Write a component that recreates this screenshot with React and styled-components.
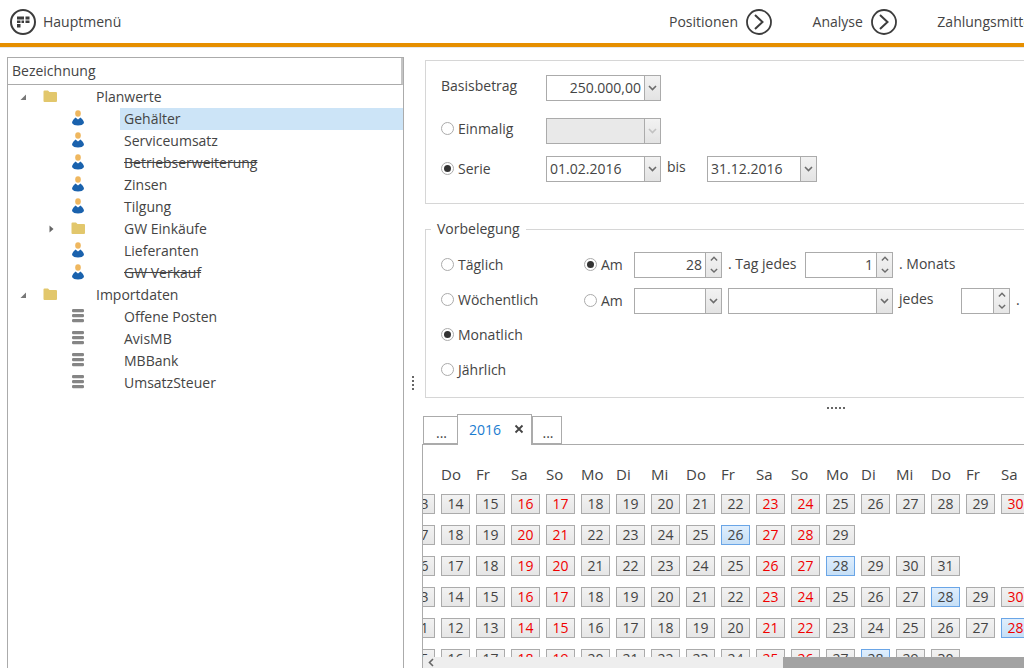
import React from "react";
import styled, { createGlobalStyle } from "styled-components";

const Global = createGlobalStyle`
  html, body { margin: 0; padding: 0; background: #fff; }
  body { font-family: "Open Sans", "Noto Sans", sans-serif; font-size: 14px; color: #444; overflow: hidden; }
`;

const Shell = styled.div`
  width: 1024px; height: 668px; overflow: hidden; display: flex; flex-direction: column;
`;
const TopBar = styled.header`
  height: 43px; flex: none; display: flex; align-items: center; padding-left: 10px;
  border-bottom: 4px solid #e68f00; box-shadow: 0 1px 0 #e8e8e8; white-space: nowrap;
`;
const HomeLink = styled.div`
  width: 659px; flex: none; display: flex; align-items: center; gap: 7px;
`;
const NavItem = styled.div`
  flex: none; display: flex; align-items: center; gap: 8px; margin-right: 40.5px;
`;
const Main = styled.div`
  flex: 1; min-height: 0; display: flex; padding-top: 10px;
`;
const TreePanel = styled.section`
  width: 397px; flex: none; margin-left: 7px; box-sizing: border-box;
  border: 1px solid #ababab; border-bottom: 0; display: flex; flex-direction: column;
`;
const TreeHead = styled.div`
  height: 26px; line-height: 26px; padding-left: 4px; border-bottom: 1px solid #ababab;
  border-right: 2px solid #c4c4c4; flex: none;
`;
const Tree = styled.div`
  padding-top: 1px;
`;
const Row = styled.div`
  height: 22px; display: flex; align-items: center; padding-left: ${p => 8 + p.$depth * 28}px;
`;
const Expander = styled.span`
  width: 14px; flex: none; display: flex; justify-content: center;
`;
const IconSlot = styled.span`
  width: 28px; margin: -2px 28px 0 6px; flex: none; display: flex; justify-content: center;
`;
const Label = styled.span`
  flex: 1; height: 22px; line-height: 22px; padding-left: 4px;
  background: ${p => (p.$selected ? "#cce4f7" : "transparent")};
  text-decoration: ${p => (p.$struck ? "line-through" : "none")};
`;
const VSplit = styled.div`
  width: 18px; flex: none; display: flex; justify-content: center; padding-top: 319px; box-sizing: border-box;
`;
const VGrip = styled.div`
  width: 2px; height: 14px;
  background: repeating-linear-gradient(to bottom, #666 0 2px, transparent 2px 4px);
`;
const Right = styled.div`
  width: 660px; flex: none; display: flex; flex-direction: column; min-height: 0;
`;
const GroupBox = styled.div`
  margin: 3px 0 0 3px; height: 144px; box-sizing: border-box; border: 1px solid #d6d6d6; padding: 14px 15px 0;
  display: flex; flex-direction: column;
`;
const FormRow = styled.div`
  height: 26px; margin-top: ${p => p.$top || 0}px; display: flex; align-items: center;
`;
const FieldLabel = styled.span`
  width: 105px; flex: none; margin-top: -6px;
`;
const RadioLabel = styled.label`
  width: ${p => p.$width}px; flex: none; display: flex; align-items: center; gap: 4px;
  margin-top: ${p => p.$shift ?? 0}px;
`;
const RadioMark = styled.span`
  width: 13px; height: 13px; flex: none; box-sizing: border-box; border-radius: 50%; border: 1px solid #ababab;
  background: #fff; display: flex; align-items: center; justify-content: center;
  &::after { content: ""; width: 7px; height: 7px; border-radius: 50%; background: ${p => (p.$on ? "#333" : "transparent")}; }
`;
const Combo = styled.div`
  width: ${p => p.$width}px; height: 26px; flex: none; box-sizing: border-box; border: 1px solid #ababab; display: flex;
  background: ${p => (p.$disabled ? "#e9e9e9" : "#fff")};
`;
const ComboValue = styled.span`
  flex: 1; min-width: 0; line-height: 24px; padding: 0 3px; text-align: ${p => (p.$right ? "right" : "left")};
  box-sizing: border-box;
`;
const ComboButton = styled.span`
  width: 16px; flex: none; box-sizing: border-box; border-left: 1px solid #ababab; display: flex; align-items: center; justify-content: center;
  background: linear-gradient(#f2f2f2, #e3e3e3);
  color: ${p => (p.$disabled ? "#c2c2c2" : "#6c6c6c")};
`;
const Spin = styled.span`
  width: 16px; flex: none; box-sizing: border-box; border-left: 1px solid #ababab; display: flex; flex-direction: column; color: #6c6c6c;
  background: linear-gradient(#f4f4f4, #e6e6e6);
`;
const SpinPart = styled.span`
  flex: 1; display: flex; align-items: center; justify-content: center;
`;
const Inline = styled.span`
  flex: none; box-sizing: border-box; width: ${p => p.$width}px; padding-left: 6px;
  margin-top: ${p => p.$shift}px; white-space: nowrap;
`;
const Fieldset = styled.fieldset`
  margin: 15px 0 0 3px; padding: 8px 0 10px 15px; border: 1px solid #d6d6d6; min-width: 0;
`;
const Legend = styled.legend`
  padding: 0 6px; margin-left: -10px; line-height: 20px;
`;
const OptionRow = styled.div`
  height: 35px; display: flex; align-items: center;
`;
const OptionControls = styled.div`
  display: flex; align-items: center; margin-top: ${p => p.$shift}px;
`;
const HSplit = styled.div`
  height: 16px; flex: none; display: flex; padding: 9px 0 0 405px; box-sizing: border-box;
`;
const HGrip = styled.div`
  width: 18px; height: 2px;
  background: repeating-linear-gradient(to right, #666 0 2px, transparent 2px 4px);
`;
const Tabs = styled.div`
  display: flex; align-items: flex-end; height: 30px; flex: none; padding-left: 1px; position: relative; z-index: 1;
`;
const Tab = styled.div`
  box-sizing: border-box; width: ${p => p.$width}px; height: 28px; background: #fff;
  border: 1px solid #ababab; border-right-width: 0;
  display: flex; align-items: center; justify-content: center; padding: 5px 0 0 2px; font-size: 14px;
  &:last-child { border-right-width: 1px; }
`;
const ActiveTab = styled.div`
  box-sizing: border-box; width: ${p => p.$width}px; height: 31px; margin-bottom: -1px; background: #fff;
  border: 1px solid #ababab; border-bottom: 0;
  display: flex; align-items: center; padding: 0 0 2px 11px; gap: 13px;
`;
const TabTitle = styled.span`
  color: #1b7cd0;
`;
const CalendarView = styled.div`
  flex: 1; min-height: 0; position: relative; overflow: hidden; border: 1px solid #ababab; border-width: 1px 0 0 1px;
`;
const CalendarGrid = styled.div`
  display: grid; grid-template-columns: repeat(18, 29px); column-gap: 6px; row-gap: 11px; grid-auto-rows: 20px;
  margin-left: -17px; padding-top: 18px; width: 640px;
`;
const DayName = styled.span`
  line-height: 22px; font-size: 15px; white-space: nowrap;
`;
const Day = styled.div`
  box-sizing: border-box; height: 20px; line-height: 18px; text-align: center; font-size: 14px;
  border: 1px solid ${p => (p.$marked ? "#6aa5e6" : "#ababab")};
  background: ${p => (p.$marked ? "linear-gradient(#dfeefd, #c6dff6)" : "linear-gradient(#f2f2f2, #e6e6e6)")};
  color: ${p => (p.$weekend ? "#f00000" : "#444")};
`;
const Scrollbar = styled.div`
  position: absolute; left: 0; right: 0; bottom: 0; height: 11px; display: flex; background: #a3a3a3;
`;
const ScrollTrack = styled.div`
  width: 360px; flex: none; background: #eee; padding-left: 5px; box-sizing: border-box; display: flex; align-items: center; color: #666;
`;
const Spacer = styled.span`
  width: 6px; flex: none;
`;

const Chevron = ({ up, size = 9 }) => (
  <svg width={size} height={size * 0.67} viewBox="0 0 9 6" aria-hidden="true">
    <path d={up ? "M1 5L4.5 1.5L8 5" : "M1 1L4.5 4.5L8 1"} fill="none" stroke="currentColor" strokeWidth="1.6" />
  </svg>
);
const CircleArrow = () => (
  <svg width="26" height="26" viewBox="0 0 26 26" aria-hidden="true">
    <circle cx="13" cy="13" r="12" fill="none" stroke="#3c3c3c" strokeWidth="1.8" />
    <path d="M9 6L16.500 13L9 20" fill="none" stroke="#3c3c3c" strokeWidth="2" />
  </svg>
);
const MenuIcon = () => (
  <svg width="26" height="26" viewBox="0 0 26 26" aria-hidden="true">
    <circle cx="13" cy="13" r="12" fill="none" stroke="#3c3c3c" strokeWidth="2" />
    <path d="M7 7.500h7v3H7zM15.500 7.500h4v3h-4zM7 11.500h3.500v2.500H7zM11.500 11.500h2.500v2.500h-2.500zM15.500 11.500h4v2.500h-4zM7 15h3.500v3.500H7z" fill="#3c3c3c" />
  </svg>
);
const Folder = () => (
  <svg width="14" height="12" viewBox="0 0 14 12" aria-hidden="true">
    <path d="M0.500 1.500Q0.500 0.500 1.500 0.500H5L6.500 2H13Q14 2 14 3V11Q14 12 13 12H1.500Q0.500 12 0.500 11Z" fill="#e2c76c" />
  </svg>
);
const Person = () => (
  <svg width="12" height="16" viewBox="0 0 12 16" aria-hidden="true">
    <ellipse cx="6" cy="3.500" rx="2.800" ry="3.300" fill="#efb75f" />
    <path d="M3.500 7.500L6 9.500L8.500 7.500L10.500 9.500Q12 11 12 13Q10.500 15.500 6 15.500Q1.500 15.500 0 13Q0 11 1.500 9.500Z" fill="#1a62ad" />
  </svg>
);
const Stack = () => (
  <svg width="12" height="14" viewBox="0 0 12 14" aria-hidden="true">
    <rect y="0" width="12" height="3.200" rx="1.200" fill="#858585" />
    <rect y="5" width="12" height="3.200" rx="1.200" fill="#858585" />
    <rect y="10" width="12" height="3.200" rx="1.200" fill="#858585" />
  </svg>
);
const Arrow = ({ open }) => (
  <svg width="7" height="8" viewBox="0 0 7 8" aria-hidden="true">
    <path d={open ? "M6 1.500V7H0.500Z" : "M1.500 0.500L5.500 4L1.500 7.500Z"} fill={open ? "#777" : "#666"} />
  </svg>
);

const treeRows = [
  { depth: 0, arrow: "open", icon: "folder", label: "Planwerte" },
  { depth: 1, icon: "person", label: "Gehälter", selected: true },
  { depth: 1, icon: "person", label: "Serviceumsatz" },
  { depth: 1, icon: "person", label: "Betriebserweiterung", struck: true },
  { depth: 1, icon: "person", label: "Zinsen" },
  { depth: 1, icon: "person", label: "Tilgung" },
  { depth: 1, arrow: "closed", icon: "folder", label: "GW Einkäufe" },
  { depth: 1, icon: "person", label: "Lieferanten" },
  { depth: 1, icon: "person", label: "GW Verkauf", struck: true },
  { depth: 0, arrow: "open", icon: "folder", label: "Importdaten" },
  { depth: 1, icon: "stack", label: "Offene Posten" },
  { depth: 1, icon: "stack", label: "AvisMB" },
  { depth: 1, icon: "stack", label: "MBBank" },
  { depth: 1, icon: "stack", label: "UmsatzSteuer" },
];
const icons = { folder: <Folder />, person: <Person />, stack: <Stack /> };

const dayNames = ["", "Do", "Fr", "Sa", "So", "Mo", "Di", "Mi", "Do", "Fr", "Sa", "So", "Mo", "Di", "Mi", "Do", "Fr", "Sa"];
const months = [
  { first: 13, last: 30, weekend: [16, 17, 23, 24, 30], marked: [] },
  { first: 17, last: 29, weekend: [20, 21, 27, 28], marked: [26] },
  { first: 16, last: 31, weekend: [19, 20, 26, 27], marked: [28] },
  { first: 13, last: 30, weekend: [16, 17, 23, 24, 30], marked: [28] },
  { first: 11, last: 28, weekend: [14, 15, 21, 22, 28], marked: [28] },
  { first: 15, last: 30, weekend: [18, 19, 25, 26], marked: [28] },
];

const Select = ({ width, value, right, disabled }) => (
  <Combo $width={width} $disabled={disabled}>
    <ComboValue $right={right}>{value}</ComboValue>
    <ComboButton $disabled={disabled}><Chevron /></ComboButton>
  </Combo>
);
const Spinner = ({ width, value }) => (
  <Combo $width={width}>
    <ComboValue $right>{value}</ComboValue>
    <Spin>
      <SpinPart><Chevron up size={8} /></SpinPart>
      <SpinPart><Chevron size={8} /></SpinPart>
    </Spin>
  </Combo>
);
const Radio = ({ on, width, shift, children }) => (
  <RadioLabel $width={width} $shift={shift}>
    <RadioMark $on={on} />
    {children}
  </RadioLabel>
);

export default function App() {
  return (
    <Shell>
      <Global />
      <TopBar>
        <HomeLink><MenuIcon />Hauptmenü</HomeLink>
        <NavItem>Positionen<CircleArrow /></NavItem>
        <NavItem>Analyse<CircleArrow /></NavItem>
        <NavItem>Zahlungsmittel<CircleArrow /></NavItem>
      </TopBar>
      <Main>
        <TreePanel>
          <TreeHead>Bezeichnung</TreeHead>
          <Tree>
            {treeRows.map(r => (
              <Row key={r.label} $depth={r.depth}>
                <Expander>{r.arrow && <Arrow open={r.arrow === "open"} />}</Expander>
                <IconSlot>{icons[r.icon]}</IconSlot>
                <Label $selected={r.selected} $struck={r.struck}>{r.label}</Label>
              </Row>
            ))}
          </Tree>
        </TreePanel>
        <VSplit><VGrip /></VSplit>
        <Right>
          <GroupBox>
            <FormRow>
              <FieldLabel>Basisbetrag</FieldLabel>
              <Select width={115} value="250.000,00" right />
            </FormRow>
            <FormRow $top={17}>
              <Radio width={105} shift={-6}>Einmalig</Radio>
              <Select width={115} disabled />
            </FormRow>
            <FormRow $top={12}>
              <Radio width={105} on shift={-2}>Serie</Radio>
              <Select width={115} value="01.02.2016" />
              <Inline $width={46} $shift={-6}>bis</Inline>
              <Select width={110} value="31.12.2016" />
            </FormRow>
          </GroupBox>
          <Fieldset>
            <Legend>Vorbelegung</Legend>
            <OptionRow>
              <Radio width={143}>Täglich</Radio>
              <OptionControls $shift={1}>
                <Radio width={50} on shift={-2}>Am</Radio>
                <Spinner width={88} value="28" />
                <Inline $width={83} $shift={-4}>. Tag jedes</Inline>
                <Spinner width={88} value="1" />
                <Inline $width={60} $shift={-4}>. Monats</Inline>
              </OptionControls>
            </OptionRow>
            <OptionRow>
              <Radio width={143}>Wöchentlich</Radio>
              <OptionControls $shift={3}>
                <Radio width={50} shift={-1}>Am</Radio>
                <Select width={88} />
                <Spacer />
                <Select width={165} />
                <Inline $width={68} $shift={-5}>jedes</Inline>
                <Spinner width={49} />
                <Inline $width={12} $shift={-3}>.</Inline>
              </OptionControls>
            </OptionRow>
            <OptionRow><Radio width={143} on>Monatlich</Radio></OptionRow>
            <OptionRow><Radio width={143}>Jährlich</Radio></OptionRow>
          </Fieldset>
          <HSplit><HGrip /></HSplit>
          <Tabs>
            <Tab $width={34}>...</Tab>
            <ActiveTab $width={75}>
              <TabTitle>2016</TabTitle>
              <svg width="10" height="10" viewBox="0 0 10 10" aria-hidden="true">
                <path d="M1.500 1.500L8.500 8.500M8.500 1.500L1.500 8.500" stroke="#444" strokeWidth="1.8" />
              </svg>
            </ActiveTab>
            <Tab $width={30}>...</Tab>
          </Tabs>
          <CalendarView>
            <CalendarGrid>
              {dayNames.map((d, i) => <DayName key={i}>{d}</DayName>)}
              {months.flatMap((m, mi) => {
                const cells = [];
                for (let n = m.first; n <= m.last; n++) {
                  cells.push(
                    <Day key={`${mi}-${n}`} $weekend={m.weekend.includes(n)} $marked={m.marked.includes(n)}>{n}</Day>
                  );
                }
                for (let n = m.last - m.first + 1; n < 18; n++) {
                  cells.push(<span key={`${mi}-e${n}`} />);
                }
                return cells;
              })}
            </CalendarGrid>
            <Scrollbar>
              <ScrollTrack>
                <svg width="6" height="9" viewBox="0 0 6 9" aria-hidden="true">
                  <path d="M5 1L1.500 4.500L5 8" fill="none" stroke="currentColor" strokeWidth="1.6" />
                </svg>
              </ScrollTrack>
            </Scrollbar>
          </CalendarView>
        </Right>
      </Main>
    </Shell>
  );
}
